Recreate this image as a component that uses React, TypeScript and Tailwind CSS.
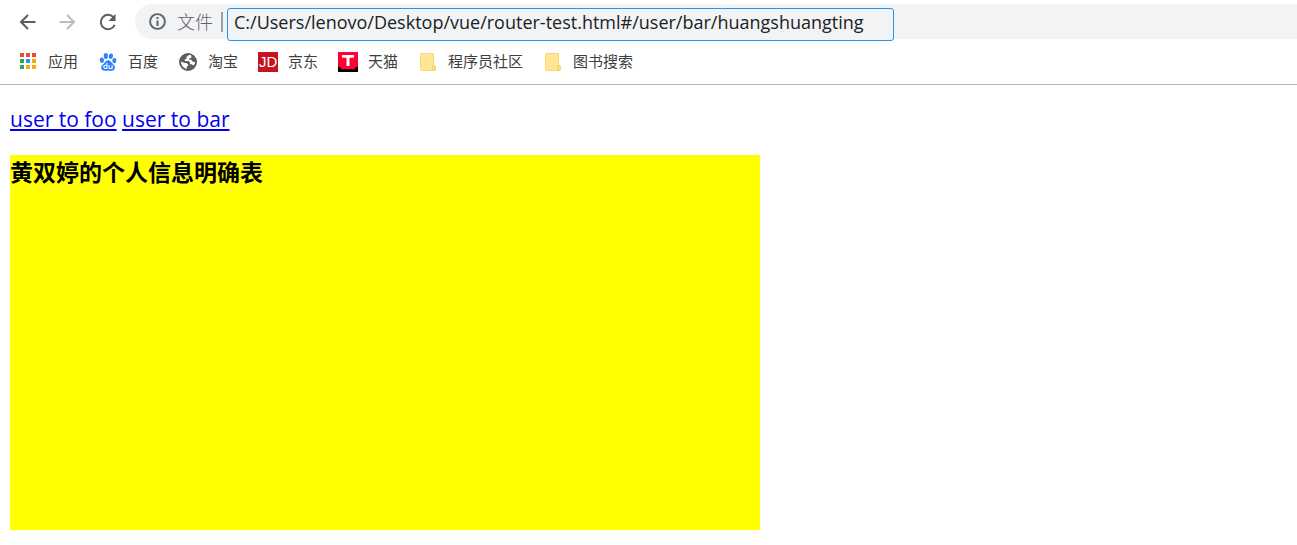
import type { ReactNode } from "react";

const ui = "font-['Open_Sans','Noto_Sans_CJK_SC',sans-serif]";

function BackIcon() {
  return (
    <svg viewBox="0 0 20 20" className="size-5" fill="none" stroke="#5a5d61" strokeWidth="2">
      <path d="M17.5 10H3.5M10 3L3 10l7 7" />
    </svg>
  );
}

function ForwardIcon() {
  return (
    <svg viewBox="0 0 20 20" className="size-5" fill="none" stroke="#babcbe" strokeWidth="2">
      <path d="M1.500 10h14M9 3l7 7-7 7" />
    </svg>
  );
}

function ReloadIcon() {
  return (
    <svg viewBox="0 0 20 20" className="size-5">
      <path d="M16.700 12.800A7.200 7.200 0 1 1 15.300 5.100" fill="none" stroke="#5a5d61" strokeWidth="2" />
      <path d="M17.500 1.700v7.300H10.500z" fill="#5a5d61" />
    </svg>
  );
}

function InfoIcon() {
  return (
    <svg viewBox="0 0 18 18" className="size-[18px] shrink-0">
      <circle cx="8.500" cy="8.500" r="7.400" fill="none" stroke="#5f6368" strokeWidth="1.900" />
      <path d="M7.500 4h2v2h-2zM7.500 7.500h2V13h-2z" fill="#5f6368" />
    </svg>
  );
}

const appColors = [
  "#f04438", "#f04438", "#f04438",
  "#26a65b", "#2196f3", "#fbaa05",
  "#26a65b", "#fbaa05", "#fbaa05",
];

function AppsIcon() {
  return (
    <svg viewBox="0 0 20 20" className="size-5">
      {appColors.map((color, i) => (
        <rect key={i} x={2 + (i % 3) * 6} y={1 + Math.floor(i / 3) * 6} width="4" height="4" fill={color} />
      ))}
    </svg>
  );
}

function BaiduIcon() {
  return (
    <svg viewBox="0 0 20 20" className="size-5" fill="#2b84fb">
      <ellipse cx="3.900" cy="8.200" rx="2.100" ry="2.700" transform="rotate(-12 3.900 8.200)" />
      <ellipse cx="7.800" cy="4" rx="2.100" ry="2.900" />
      <ellipse cx="12.900" cy="4.200" rx="2.100" ry="2.800" transform="rotate(10 12.900 4.200)" />
      <ellipse cx="16.300" cy="8.600" rx="2" ry="2.600" transform="rotate(8 16.300 8.600)" />
      <path d="M10.200 8.200c2 0 2.700 1.700 4 3.100 1.400 1.400 3 2.200 2.800 4.500-.2 2.200-1.700 3-3.600 2.900-1.100 0-2-.3-3.200-.3s-2.200.4-3.400.4c-2 0-3.500-.8-3.600-3-.1-2.200 1.500-3.200 2.900-4.600 1.300-1.300 2-3 4.100-3z" />
      <g fill="none" stroke="#fff" strokeWidth="1.100">
        <path d="M8.900 11v5.500H7.300c-2 0-2-3.300 0-3.300h1.600M11 13v2.200c0 1 .5 1.300 1.300 1.300h1.800V13" />
      </g>
    </svg>
  );
}

function GlobeIcon() {
  return (
    <svg viewBox="0 0 20 20" className="size-5">
      <circle cx="10" cy="10" r="9" fill="#5b5e62" />
      <path d="M10.500 3.200l-1.900 1.500v1.800l-1.800.9v1.700h3.900l1.300 1.400v1.800h1.700l1.700 1.300c1-1.100 1.600-2.300 1.600-3.700l-2.200-.2-1.700-1.900h-2V6.600l2.200-.7V3.500c-.8-.3-1.900-.5-2.800-.3z" fill="#fff" />
      <path d="M3.100 9.500l3.500 1.400h1.800l1.700 1.600v1.600H8.900v2.600c-3.300-.4-5.900-3.300-5.800-7.200z" fill="#fff" />
    </svg>
  );
}

function JdIcon() {
  return (
    <span className="flex size-5 items-center justify-center bg-[#c5141f] font-['Liberation_Sans',sans-serif] text-[15px] leading-none text-white">
      JD
    </span>
  );
}

function TmallIcon() {
  return (
    <svg viewBox="0 0 20 20" className="size-5">
      <path d="M0 0h20v20H0z" fill="#000" />
      <path d="M0 0h20v14.500c-1.500.2-2 .6-2.600 1.600-.6 1.100-1.300 1.500-2.600 1.300-1-.2-1.600-.4-2.500-.4H7.700c-.9 0-1.500.2-2.500.4-1.300.2-2-.2-2.600-1.300-.6-1-1.100-1.400-2.600-1.600z" fill="#ff0030" />
      <path d="M4 3h12v2.700h-4.500V14h-3V5.700H4z" fill="#fff" />
    </svg>
  );
}

function FolderIcon() {
  return (
    <svg viewBox="0 0 20 20" className="size-5">
      <path d="M3.500 1.500h12v11l1.700 1.500v4.500H3.500a1 1 0 0 1-1-1v-15a1 1 0 0 1 1-1z" fill="#ffe694" stroke="#f7d872" />
      <path d="M14.500 18.500v-3.600c0-.8.500-1.400 1.200-1.400s1.500.5 1.500 1.300v2.700c0 .6-.4 1-1 1z" fill="#ffe084" stroke="#f4d064" />
    </svg>
  );
}

const bookmarks: { label: string; icon: ReactNode }[] = [
  { label: "应用", icon: <AppsIcon /> },
  { label: "百度", icon: <BaiduIcon /> },
  { label: "淘宝", icon: <GlobeIcon /> },
  { label: "京东", icon: <JdIcon /> },
  { label: "天猫", icon: <TmallIcon /> },
  { label: "程序员社区", icon: <FolderIcon /> },
  { label: "图书搜索", icon: <FolderIcon /> },
];

function Toolbar() {
  return (
    <div className="flex items-start pt-1">
      <nav className="flex h-[35px] shrink-0 items-center gap-5 pr-[17px] pl-[18px]">
        <button type="button" aria-label="后退"><BackIcon /></button>
        <button type="button" aria-label="前进"><ForwardIcon /></button>
        <button type="button" aria-label="重新加载"><ReloadIcon /></button>
      </nav>
      <div className="flex h-[35px] min-w-0 flex-1 items-start rounded-l-full bg-[#f1f3f4] pl-[14px]">
        <label htmlFor="address" className="flex h-[35px] shrink-0 items-center text-lg font-light text-[#5f6368]">
          <InfoIcon />
          <span className="ml-[10px]">文件</span>
          <span className="mr-1 ml-2 h-5 w-[2px] bg-[#9b9ea2]" />
        </label>
        <input
          id="address"
          type="text"
          defaultValue="C:/Users/lenovo/Desktop/vue/router-test.html#/user/bar/huangshuangting"
          className="mt-1 h-[33px] w-[667px] min-w-0 rounded-[3px] border border-[#2196f3] bg-[#f1f3f4] px-[6px] pb-[6px] text-lg text-[#202124] outline-none"
        />
      </div>
    </div>
  );
}

function BookmarksBar() {
  return (
    <nav className="flex h-[46px] items-center gap-5 overflow-hidden border-b border-[#b4b4b4] pl-[18px]">
      {bookmarks.map(({ label, icon }) => (
        <button key={label} type="button" className="flex shrink-0 items-center gap-[10px] text-[15px] text-[#3c4043]">
          {icon}
          {label}
        </button>
      ))}
    </nav>
  );
}

export default function App() {
  return (
    <div className={`min-h-screen bg-white ${ui}`}>
      <header>
        <Toolbar />
        <BookmarksBar />
      </header>
      <main className="px-[10px] pt-5 pb-4">
        <p className="text-[21px] leading-7 text-[#0000ee]">
          <a href="#/user/foo" className="underline">user to foo</a>{" "}
          <a href="#/user/bar" className="underline">user to bar</a>
        </p>
        <section className="mt-[22px] h-[375px] max-w-[750px] bg-[#ffff00]">
          <h3 className="text-[23px] leading-[34px] font-bold text-black">黄双婷的个人信息明确表</h3>
        </section>
      </main>
    </div>
  );
}
